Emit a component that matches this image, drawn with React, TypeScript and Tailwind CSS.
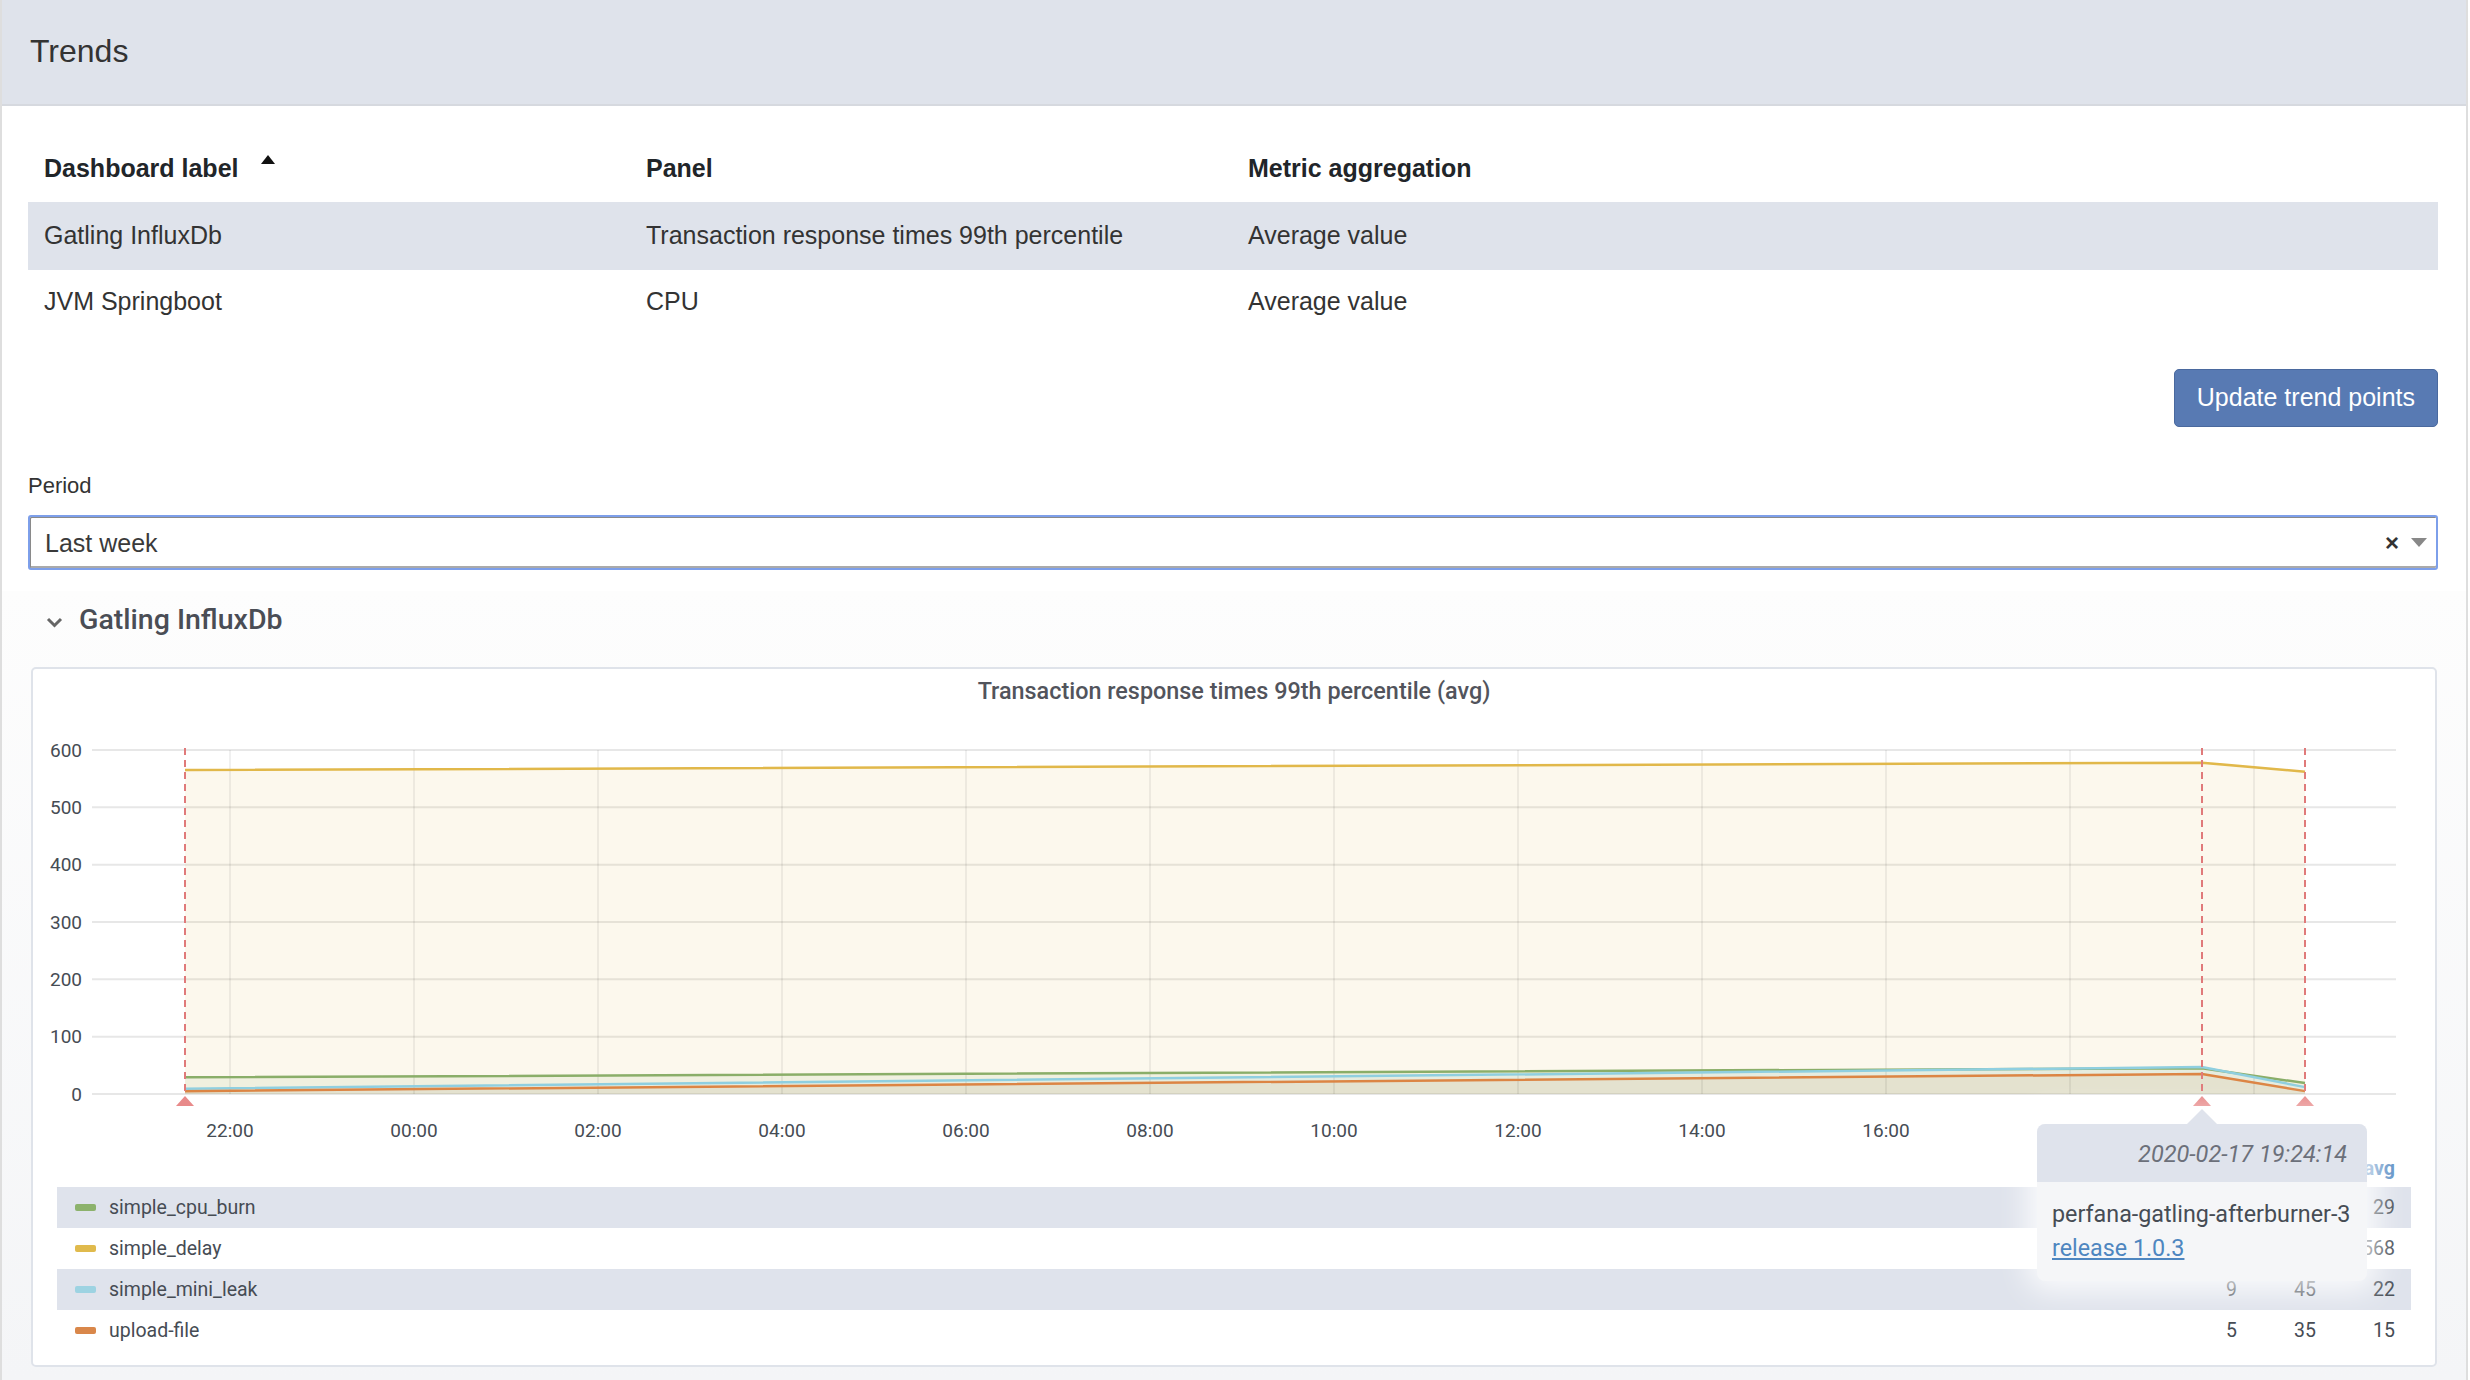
import React from "react";

type Series = {
  name: string;
  color: string;
  swatch: string;
  pts: number[];
  min: number;
  max: number;
  avg: number;
};

// x positions (svg coords) of the three data points / annotations
const XS = [152, 2169, 2272];
const Y0 = 379;
const PER = 0.5733; // px per unit
const y = (v: number) => Y0 - v * PER;

const series: Series[] = [
  { name: "simple_cpu_burn", color: "#8aae69", swatch: "#8cb26c", pts: [29, 45, 19], min: 19, max: 45, avg: 29 },
  { name: "simple_delay", color: "#e1b84a", swatch: "#e0ba4c", pts: [565, 578, 562], min: 562, max: 578, avg: 568 },
  { name: "simple_mini_leak", color: "#8fcfe0", swatch: "#9dd3e2", pts: [9, 47, 12], min: 9, max: 45, avg: 22 },
  { name: "upload-file", color: "#dc8544", swatch: "#d9874a", pts: [5, 35, 5], min: 5, max: 35, avg: 15 },
];

const drawOrder = [1, 0, 2, 3];

const xTicks = ["22:00", "00:00", "02:00", "04:00", "06:00", "08:00", "10:00", "12:00", "14:00", "16:00", "18:00", "20:00"];

function TrendChart() {
  return (
    <svg width={2402} height={436} className="block">
      {/* horizontal grid */}
      {[0, 100, 200, 300, 400, 500, 600].map((v) => (
        <g key={v}>
          <line x1={59} x2={2363} y1={y(v)} y2={y(v)} stroke="#e7e7e7" strokeWidth={2} />
          <text x={49} y={y(v)} dy="0.35em" textAnchor="end" fontSize={19} fill="#464c54" fontFamily="Roboto, sans-serif">
            {v}
          </text>
        </g>
      ))}

      {/* fills */}
      {drawOrder.map((i) => {
        const s = series[i];
        const line = s.pts.map((v, k) => `${XS[k]},${y(v)}`).join(" ");
        return (
          <polygon key={s.name} points={`${line} ${XS[2]},${Y0} ${XS[0]},${Y0}`} fill={s.color} fillOpacity={0.1} />
        );
      })}

      {/* vertical grid + x labels */}
      {xTicks.map((t, k) => {
        const x = 197 + 184 * k;
        return (
          <g key={t}>
            <line x1={x} x2={x} y1={35} y2={Y0} stroke="#000" strokeOpacity={0.08} strokeWidth={1.5} />
            <text x={x} y={415} dy="0.35em" textAnchor="middle" fontSize={19} fill="#464c54" fontFamily="Roboto, sans-serif">
              {t}
            </text>
          </g>
        );
      })}

      {/* lines */}
      {drawOrder.map((i) => {
        const s = series[i];
        return (
          <polyline
            key={s.name}
            points={s.pts.map((v, k) => `${XS[k]},${y(v)}`).join(" ")}
            fill="none"
            stroke={s.color}
            strokeWidth={2.5}
            strokeLinejoin="round"
          />
        );
      })}

      {/* annotations */}
      {XS.map((x) => (
        <g key={x}>
          <line x1={x} x2={x} y1={33} y2={Y0} stroke="#e07a7a" strokeWidth={2} strokeDasharray="7 5" />
          <polygon points={`${x - 9},391 ${x + 9},391 ${x},381`} fill="#e88a8a" />
        </g>
      ))}
    </svg>
  );
}

export default function App() {
  return (
    <div className="w-[2470px] h-[1380px] overflow-hidden bg-white font-['Liberation_Sans',Arial,sans-serif] text-[#333]">
      <div className="w-[2468px] h-full border-x-2 border-[#dedede] flex flex-col">
        {/* Header */}
        <div className="h-[106px] shrink-0 bg-[#dfe3eb] border-b-2 border-[#d6d9df] flex items-center pl-[28px] pb-[2px] text-[32px] text-[#333]">
          Trends
        </div>

        <div className="pl-[26px] pr-[28px]">
          {/* Table */}
          <div className="mt-[30px] text-[25px]">
            <div className="grid grid-cols-[602px_602px_1fr] h-[66px] items-center font-bold text-[#212529]">
              <div className="pl-[16px] flex items-center">
                Dashboard label
                <span className="ml-[22px] mb-[20px] w-0 h-0 border-x-[7px] border-x-transparent border-b-[9px] border-b-[#111]" />
              </div>
              <div className="pl-[16px]">Panel</div>
              <div className="pl-[16px]">Metric aggregation</div>
            </div>
            <div className="grid grid-cols-[602px_602px_1fr] h-[68px] items-center bg-[#dfe3eb]">
              <div className="pl-[16px]">Gatling InfluxDb</div>
              <div className="pl-[16px]">Transaction response times 99th percentile</div>
              <div className="pl-[16px]">Average value</div>
            </div>
            <div className="grid grid-cols-[602px_602px_1fr] h-[64px] items-center">
              <div className="pl-[16px]">JVM Springboot</div>
              <div className="pl-[16px]">CPU</div>
              <div className="pl-[16px]">Average value</div>
            </div>
          </div>

          <div className="flex justify-end mt-[35px]">
            <button className="h-[58px] px-[22px] rounded-[5px] border border-[#4a699e] bg-[#587ab3] text-white text-[25px]">
              Update trend points
            </button>
          </div>

          {/* Period */}
          <div className="mt-[46px] text-[22px] leading-[26px] text-[#333]">Period</div>
          <div className="mt-[16px] h-[55px] border-2 border-[#7d9fea] rounded-[3px] shadow-[inset_1px_1px_0_#8a8a8a,inset_0_-2px_0_#aaa] flex items-center pl-[15px] pr-[9px] text-[25px] text-[#3a3a3a]">
            <span className="flex-1 pt-[2px]">Last week</span>
            <span className="text-[24px] font-bold text-[#333] leading-none">×</span>
            <span className="ml-[12px] w-0 h-0 border-x-[8px] border-x-transparent border-t-[9px] border-t-[#888]" />
          </div>
        </div>

        {/* Dashboard section */}
        <div className="mt-[21px] flex-1 bg-linear-to-b from-[#fdfdfd] to-[#f4f5f7] pl-[29px] pr-[29px] font-['Roboto',sans-serif]">
          <div className="h-[58px] flex items-center pl-[15px] gap-[16px] mb-[18px]">
            <svg width="17" height="11" viewBox="0 0 17 11" className="mt-[4px]">
              <path d="M2 2 L8.5 8.5 L15 2" stroke="#666" strokeWidth="3" fill="none" />
            </svg>
            <span className="text-[28.5px] font-medium text-[#4a4d55]">Gatling InfluxDb</span>
          </div>

          <div className="relative h-[700px] bg-white border-2 border-[#dfe3ea] rounded-[5px]">
            <div className="h-[46px] flex items-center justify-center text-[23.4px] font-medium text-[#52545c]">
              Transaction response times 99th percentile (avg)
            </div>

            <TrendChart />

            {/* Legend */}
            <div className="px-[24px] text-[19.5px] text-[#464c54]">
              <div className="flex h-[36px] items-center font-medium">
                <div className="flex-1" />
                <div className="w-[79px] text-right">min</div>
                <div className="w-[79px] text-right">max</div>
                <div className="w-[95px] pr-[16px] text-right font-bold text-[#5a8dc4]">avg</div>
              </div>
              {series.map((s, i) => (
                <div key={s.name} className={i % 2 === 0 ? "flex h-[41px] items-center bg-[#dfe3ec]" : "flex h-[41px] items-center"}>
                  <div className="flex-1 flex items-center pl-[18px]">
                    <span className="w-[21px] h-[7px] rounded-[2px]" style={{ backgroundColor: s.swatch }} />
                    <span className="ml-[13px]">{s.name}</span>
                  </div>
                  <div className="w-[79px] text-right">{s.min}</div>
                  <div className="w-[79px] text-right">{s.max}</div>
                  <div className="w-[95px] pr-[16px] text-right">{s.avg}</div>
                </div>
              ))}
            </div>

            {/* Annotation tooltip */}
            <div className="absolute left-[2004px] top-[455px] w-[330px] rounded-[8px] bg-[#f5f6f8] shadow-[0_0_30px_10px_rgba(255,255,255,0.85)]">
              <div className="absolute -top-[15px] left-[150px] w-0 h-0 border-x-[15px] border-x-transparent border-b-[15px] border-b-[#dfe3ec]" />
              <div className="h-[58px] rounded-t-[8px] bg-[#dfe3ec] flex items-center justify-end pr-[20px] pt-[4px] italic text-[23.5px] text-[#6c707a]">
                2020-02-17 19:24:14
              </div>
              <div className="pl-[15px] pt-[15px] pb-[16px] text-[23.3px] leading-[34px] text-[#464c54]">
                <div>perfana-gatling-afterburner-3</div>
                <a className="text-[#4e86c0] underline">release 1.0.3</a>
              </div>
            </div>
          </div>
        </div>
      </div>
    </div>
  );
}
